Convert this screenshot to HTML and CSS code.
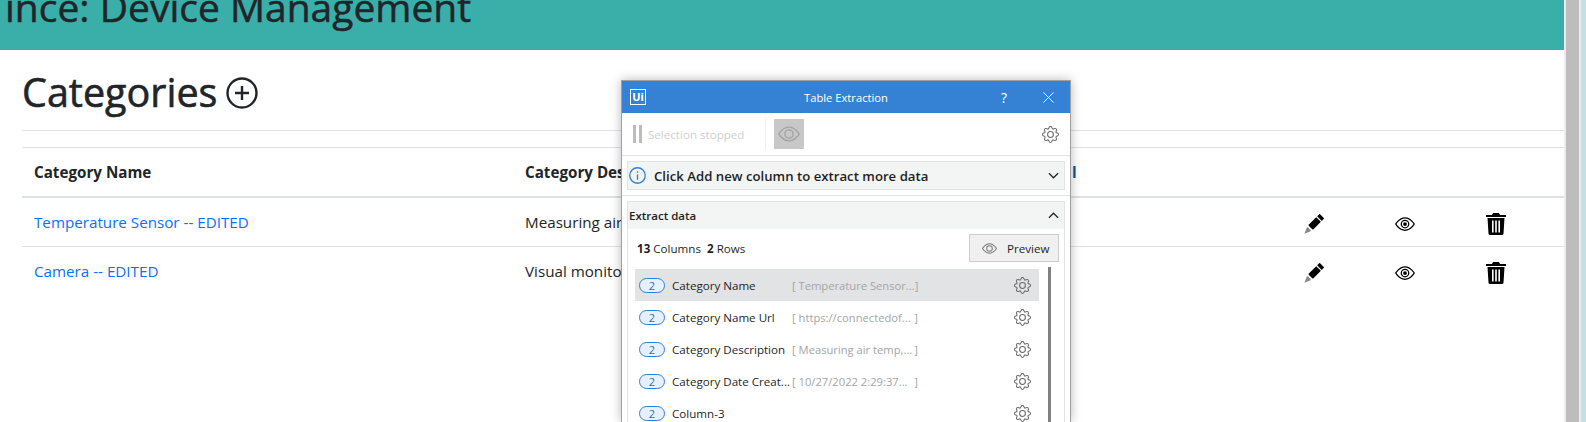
FILE: index.html
```html
<!DOCTYPE html>
<html lang="en">

<head>
  <meta charset="UTF-8">
  <title>Categories</title>
  <link rel="stylesheet" href="styles.css">
</head>

<body>
  <svg class="defs" width="0" height="0">
    <symbol id="gear" viewBox="0 0 16 16">
      <path d="M8 4.754a3.246 3.246 0 1 0 0 6.492 3.246 3.246 0 0 0 0-6.492zM5.754 8a2.246 2.246 0 1 1 4.492 0 2.246 2.246 0 0 1-4.492 0z"/>
      <path d="M9.796 1.343c-.527-1.79-3.065-1.79-3.592 0l-.094.319a.873.873 0 0 1-1.255.52l-.292-.16c-1.64-.892-3.433.902-2.54 2.541l.159.292a.873.873 0 0 1-.52 1.255l-.319.094c-1.79.527-1.79 3.065 0 3.592l.319.094a.873.873 0 0 1 .52 1.255l-.16.292c-.892 1.64.901 3.434 2.541 2.54l.292-.159a.873.873 0 0 1 1.255.52l.094.319c.527 1.79 3.065 1.79 3.592 0l.094-.319a.873.873 0 0 1 1.255-.52l.292.16c1.64.893 3.434-.902 2.54-2.541l-.159-.292a.873.873 0 0 1 .52-1.255l.319-.094c1.79-.527 1.79-3.065 0-3.592l-.319-.094a.873.873 0 0 1-.52-1.255l.16-.292c.893-1.64-.902-3.433-2.541-2.54l-.292.159a.873.873 0 0 1-1.255-.52l-.094-.319zm-2.633.283c.246-.835 1.428-.835 1.674 0l.094.319a1.873 1.873 0 0 0 2.693 1.115l.291-.16c.764-.415 1.6.42 1.184 1.185l-.159.292a1.873 1.873 0 0 0 1.116 2.692l.318.094c.835.246.835 1.428 0 1.674l-.319.094a1.873 1.873 0 0 0-1.115 2.693l.16.291c.415.764-.42 1.6-1.185 1.184l-.291-.159a1.873 1.873 0 0 0-2.693 1.116l-.094.318c-.246.835-1.428.835-1.674 0l-.094-.319a1.873 1.873 0 0 0-2.692-1.115l-.292.16c-.764.415-1.6-.42-1.184-1.185l.159-.291A1.873 1.873 0 0 0 1.945 8.93l-.319-.094c-.835-.246-.835-1.428 0-1.674l.319-.094A1.873 1.873 0 0 0 3.06 4.377l-.16-.292c-.415-.764.42-1.6 1.185-1.184l.292.159a1.873 1.873 0 0 0 2.692-1.115l.094-.319z"/>
    </symbol>
    <symbol id="eye" viewBox="0 0 16 16">
      <path d="M16 8s-3-5.500-8-5.500S0 8 0 8s3 5.500 8 5.500S16 8 16 8zM1.173 8a13.133 13.133 0 0 1 1.660-2.043C4.120 4.668 5.880 3.500 8 3.500c2.120 0 3.879 1.168 5.168 2.457A13.133 13.133 0 0 1 14.828 8c-.058.087-.122.183-.195.288-.335.480-.830 1.120-1.465 1.755C11.879 11.332 10.119 12.500 8 12.500c-2.120 0-3.879-1.168-5.168-2.457A13.134 13.134 0 0 1 1.172 8z"/>
      <path d="M8 5.500a2.500 2.500 0 1 0 0 5 2.500 2.500 0 0 0 0-5zM4.500 8a3.500 3.500 0 1 1 7 0 3.500 3.500 0 0 1-7 0z"/>
    </symbol>
    <symbol id="eye-dot" viewBox="0 0 16 16">
      <path d="M16 8s-3-5.500-8-5.500S0 8 0 8s3 5.500 8 5.500S16 8 16 8zM1.173 8a13.133 13.133 0 0 1 1.660-2.043C4.120 4.668 5.880 3.500 8 3.500c2.120 0 3.879 1.168 5.168 2.457A13.133 13.133 0 0 1 14.828 8c-.058.087-.122.183-.195.288-.335.480-.830 1.120-1.465 1.755C11.879 11.332 10.119 12.500 8 12.500c-2.120 0-3.879-1.168-5.168-2.457A13.134 13.134 0 0 1 1.172 8z"/>
      <path d="M8 5.500a2.500 2.500 0 1 0 0 5 2.500 2.500 0 0 0 0-5zM4.500 8a3.500 3.500 0 1 1 7 0 3.500 3.500 0 0 1-7 0z"/>
      <circle cx="8" cy="8" r="1.500"/>
    </symbol>
    <symbol id="pencil" viewBox="0 0 16 16">
      <path d="M12.854.146a.5.5 0 0 0-.707 0L10.500 1.793 14.207 5.500l1.647-1.646a.5.5 0 0 0 0-.708l-3-3zm.646 6.061L9.793 2.500 3.293 9H3.500a.5.5 0 0 1 .5.5v.5h.5a.5.5 0 0 1 .5.5v.5h.5a.5.5 0 0 1 .5.5v.5h.5a.5.5 0 0 1 .5.5v.207l6.500-6.500z"/>
      <path d="M2.500 10.200L.3 15.700 5.800 13.500 5 13v-1H4v-1H3z" fill="#8a8a8a"/>
    </symbol>
    <symbol id="trash" viewBox="0 0 20 22">
      <path d="M7 0h6l1 2h6v2H0V2h6z"/>
      <path d="M1.500 5h17l-1 15.500a1.500 1.500 0 0 1-1.500 1.500H4a1.500 1.500 0 0 1-1.500-1.500zM6 7.500v12h1.600v-12zm3.200 0v12h1.600v-12zm3.200 0v12H14v-12z" fill-rule="evenodd"/>
    </symbol>
    <symbol id="chevron" viewBox="0 0 12 7">
      <path d="M1 1l5 5 5-5" fill="none" stroke="currentColor" stroke-width="1.300"/>
    </symbol>
  </svg>

  <div class="page">
    <header class="banner">
      <h1>ince: Device Management</h1>
    </header>

    <main class="content">
      <h2 class="page-title">
        Categories
        <svg class="add-icon" viewBox="0 0 32 32">
          <circle cx="16" cy="16" r="14.500" fill="none" stroke="#212529" stroke-width="2.400"/>
          <path d="M16 9v14M9 16h14" fill="none" stroke="#212529" stroke-width="2.400"/>
        </svg>
      </h2>
      <hr class="rule">

      <table class="cat-table">
        <colgroup>
          <col class="col-name">
          <col class="col-desc">
          <col class="col-url">
          <col class="col-act">
          <col class="col-act">
          <col class="col-act">
          <col>
        </colgroup>
        <thead>
          <tr>
            <th>Category Name</th>
            <th>Category Description</th>
            <th class="th-link">l</th>
            <th></th>
            <th></th>
            <th></th>
            <th></th>
          </tr>
        </thead>
        <tbody>
          <tr>
            <td><a href="#">Temperature Sensor -- EDITED</a></td>
            <td>Measuring air temp, humidity</td>
            <td></td>
            <td class="act"><svg class="act-icon"><use href="#pencil"/></svg></td>
            <td class="act"><svg class="act-icon eye"><use href="#eye-dot"/></svg></td>
            <td class="act"><svg class="act-icon bin"><use href="#trash"/></svg></td>
            <td></td>
          </tr>
          <tr>
            <td><a href="#">Camera -- EDITED</a></td>
            <td>Visual monitoring</td>
            <td></td>
            <td class="act"><svg class="act-icon"><use href="#pencil"/></svg></td>
            <td class="act"><svg class="act-icon eye"><use href="#eye-dot"/></svg></td>
            <td class="act"><svg class="act-icon bin"><use href="#trash"/></svg></td>
            <td></td>
          </tr>
        </tbody>
      </table>
    </main>
  </div>

  <div class="scrollbar">
    <div class="scroll-track"></div>
    <div class="scroll-edge"></div>
  </div>

  <!-- extraction window floating over the page -->
  <section class="wizard">
    <div class="wiz-title">
      <span class="wiz-logo">Ui</span>
      <span class="wiz-name">Table Extraction</span>
      <span class="wiz-help">?</span>
      <svg class="wiz-close" viewBox="0 0 12 12"><path d="M.5.5l11 11M11.500.5l-11 11" fill="none" stroke="#fff" stroke-width="1"/></svg>
    </div>

    <div class="wiz-tools">
      <span class="pause"><i></i><i></i></span>
      <span class="stopped">Selection stopped</span>
      <span class="tool-sep"></span>
      <span class="eye-btn"><svg><use href="#eye"/></svg></span>
      <svg class="gear tool-gear"><use href="#gear"/></svg>
    </div>

    <div class="wiz-block">
      <div class="notice">
        <svg class="info" viewBox="0 0 16 16">
          <circle cx="8" cy="8" r="7.300" fill="none" stroke="#2b7fd8" stroke-width="1.200"/>
          <path d="M8 7v5M8 4v1.500" fill="none" stroke="#2b7fd8" stroke-width="1.300"/>
        </svg>
        <span class="notice-text">Click Add new column to extract more data</span>
        <svg class="chev"><use href="#chevron"/></svg>
      </div>
    </div>

    <div class="wiz-block extract">
      <div class="extract-head">
        <span>Extract data</span>
        <svg class="chev up"><use href="#chevron"/></svg>
      </div>
      <div class="extract-body">
        <div class="summary">
          <span><b>13</b> Columns &nbsp;<b>2</b> Rows</span>
          <button class="preview"><svg><use href="#eye"/></svg>Preview</button>
        </div>
        <div class="col-list">
          <div class="col-row selected">
            <span class="badge">2</span>
            <span class="col-title">Category Name</span>
            <span class="sample"><span>[ Temperature Sensor...</span><span>]</span></span>
            <svg class="gear"><use href="#gear"/></svg>
          </div>
          <div class="col-row">
            <span class="badge">2</span>
            <span class="col-title">Category Name Url</span>
            <span class="sample"><span>[ https://connectedof...</span><span>]</span></span>
            <svg class="gear"><use href="#gear"/></svg>
          </div>
          <div class="col-row">
            <span class="badge">2</span>
            <span class="col-title">Category Description</span>
            <span class="sample"><span>[ Measuring air temp,...</span><span>]</span></span>
            <svg class="gear"><use href="#gear"/></svg>
          </div>
          <div class="col-row">
            <span class="badge">2</span>
            <span class="col-title">Category Date Creat...</span>
            <span class="sample"><span>[ 10/27/2022 2:29:37...</span><span>]</span></span>
            <svg class="gear"><use href="#gear"/></svg>
          </div>
          <div class="col-row">
            <span class="badge">2</span>
            <span class="col-title">Column-3</span>
            <span class="sample"></span>
            <svg class="gear"><use href="#gear"/></svg>
          </div>
          <div class="list-scroll"></div>
        </div>
      </div>
    </div>
  </section>
</body>

</html>
```

FILE: styles.css
```css
body {
  margin: 0;
  height: 422px;
  overflow: hidden;
  display: flex;
  position: relative;
  background: #fff;
  color: #212529;
  font-family: "Open Sans", "Noto Sans", sans-serif;
}

.defs {
  position: absolute;
}

.page {
  width: 1564px;
  flex: none;
  overflow: hidden;
}

.banner {
  height: 50px;
  background-color: #3aafa9;
  overflow: hidden;
}

.banner h1 {
  margin: -16px 0 0 5px;
  font-size: 39px;
  font-weight: 400;
  -webkit-text-stroke: 0.5px #212529;
  line-height: 46px;
  white-space: nowrap;
}

.content {
  padding-left: 22px;
}

.page-title {
  margin: 17px 0 0;
  height: 49px;
  display: flex;
  align-items: center;
  gap: 9px;
  font-size: 39.5px;
  font-weight: 400;
  -webkit-text-stroke: 0.6px #212529;
  line-height: 48px;
}

.add-icon {
  width: 32px;
  height: 32px;
  margin-top: 2px;
}

.rule {
  margin: 14px 0 0;
  border: 0;
  border-top: 1px solid #dee2e6;
}

.cat-table {
  width: 1542px;
  margin-top: 16px;
  border-collapse: collapse;
  table-layout: fixed;
  border-top: 1px solid #dee2e6;
  font-size: 15.2px;
}

.col-name { width: 491px; }
.col-desc { width: 547px; }
.col-url { width: 208px; }
.col-act { width: 91px; }

.cat-table th {
  height: 48px;
  padding: 0 12px;
  text-align: left;
  font-weight: 700;
  white-space: nowrap;
  border-bottom: 2px solid #dee2e6;
}

.cat-table .th-link {
  color: #0d4fa8;
}

.cat-table td {
  height: 48px;
  padding: 0 12px;
  white-space: nowrap;
  overflow: hidden;
  border-bottom: 1px solid #dee2e6;
}

.cat-table tbody tr:last-child td {
  border-bottom: 0;
}

.cat-table a {
  color: #0d6efd;
  text-decoration: none;
}

.cat-table .act {
  padding: 0;
  text-align: center;
}

.act-icon {
  width: 20px;
  height: 20px;
  margin-top: 3px;
  vertical-align: middle;
}

.act-icon.bin {
  height: 22px;
}

.scrollbar {
  flex: 1;
  display: flex;
  background: #ececec;
  padding-left: 2px;
}

.scroll-track {
  width: 13px;
  background: #bdbdbd;
}

.scroll-edge {
  margin-left: 2px;
  flex: 1;
  background: #c5dfe2;
}

/* table extraction window */
.wizard {
  position: absolute;
  left: 621px;
  top: 80px;
  width: 450px;
  height: 342px;
  overflow: hidden;
  box-sizing: border-box;
  background: #fff;
  border: 1px solid #a0a0a0;
  border-bottom: 0;
  box-shadow: 0 0 10px rgba(0, 0, 0, 0.28);
  font-size: 11.6px;
  color: #1f1f1f;
}

.wiz-title {
  height: 32px;
  display: flex;
  align-items: center;
  position: relative;
  background: #3582d4;
  color: #fff;
}

.wiz-logo {
  width: 14px;
  height: 14px;
  margin-left: 8px;
  border: 1px solid #fff;
  font-size: 11px;
  font-weight: 700;
  line-height: 14px;
  text-align: center;
}

.wiz-name {
  position: absolute;
  left: 0;
  right: 0;
  text-align: center;
  font-size: 11.2px;
}

.wiz-help {
  margin-left: auto;
  font-size: 14px;
}

.wiz-close {
  width: 11px;
  height: 11px;
  margin: 0 16px 0 36px;
}

.wiz-tools {
  height: 43px;
  box-sizing: border-box;
  display: flex;
  align-items: center;
  border-bottom: 1px solid #e3e3e3;
}

.pause {
  display: flex;
  gap: 3px;
  margin-left: 11px;
}

.pause i {
  display: block;
  width: 3px;
  height: 18px;
  background: #bdbdbd;
}

.stopped {
  margin-left: 6px;
  width: 117px;
  color: #cfcfcf;
}

.tool-sep {
  width: 1px;
  height: 32px;
  background: #eeeeee;
}

.eye-btn {
  width: 30px;
  height: 30px;
  margin-left: 8px;
  display: flex;
  align-items: center;
  justify-content: center;
  background: #c8c8c8;
}

.eye-btn svg {
  width: 22px;
  height: 22px;
  fill: #a3a3a3;
}

.gear {
  width: 17px;
  height: 17px;
  flex: none;
  fill: #6d6d6d;
}

.tool-gear {
  margin-left: auto;
  margin-right: 11px;
}

.wiz-block {
  padding: 5px 5px;
  border-bottom: 1px solid #e3e3e3;
}

.notice {
  height: 29px;
  box-sizing: border-box;
  display: flex;
  align-items: center;
  padding: 0 5px 0 1px;
  background: #f3f5f4;
  border: 1px solid #e3e3e3;
}

.info {
  width: 17px;
  height: 17px;
}

.notice-text {
  margin-left: 8px;
  font-size: 13.2px;
  font-weight: 600;
}

.chev {
  width: 11px;
  height: 7px;
  margin-left: auto;
  color: #222;
}

.chev.up {
  transform: rotate(180deg);
}

.extract {
  border-bottom: 0;
}

.extract-head {
  height: 28px;
  box-sizing: border-box;
  display: flex;
  align-items: center;
  padding: 0 5px 0 1px;
  background: #f3f5f4;
  border: 1px solid #e3e3e3;
  border-bottom: 0;
  font-size: 11.5px;
  font-weight: 600;
}

.extract-body {
  border-left: 1px solid #e3e3e3;
  border-right: 1px solid #e3e3e3;
  height: 300px;
}

.summary {
  height: 40px;
  box-sizing: border-box;
  display: flex;
  align-items: center;
  justify-content: space-between;
  padding: 5px 5px 7px 9px;
}

.summary b {
  font-weight: 700;
}

.preview {
  width: 90px;
  height: 28px;
  display: flex;
  align-items: center;
  gap: 10px;
  padding: 0 0 0 12px;
  background: #f0f0f0;
  border: 1px solid #cccccc;
  font: inherit;
  color: #1f1f1f;
}

.preview svg {
  width: 15px;
  height: 15px;
  fill: #777;
}

.col-list {
  position: relative;
  margin: 0 25px 0 7px;
}

.col-row {
  height: 32px;
  display: flex;
  align-items: center;
}

.col-row.selected {
  background: #e2e3e5;
}

.badge {
  width: 24px;
  height: 13px;
  flex: none;
  margin-left: 4px;
  border: 1px solid #2b7fd8;
  border-radius: 8px;
  background: #e8f0fb;
  color: #2a6ebf;
  font-size: 11px;
  line-height: 13px;
  text-align: center;
}

.col-title {
  width: 120px;
  flex: none;
  margin-left: 7px;
  white-space: nowrap;
}

.sample {
  width: 126px;
  flex: none;
  display: flex;
  justify-content: space-between;
  color: #a5a5a5;
  font-size: 11.2px;
  white-space: nowrap;
}

.col-row .gear {
  margin-left: auto;
  margin-right: 8px;
}

/* sits beside the rows */
.list-scroll {
  position: absolute;
  right: -12px;
  top: -2px;
  width: 3px;
  height: 300px;
  background: #808080;
}
```
